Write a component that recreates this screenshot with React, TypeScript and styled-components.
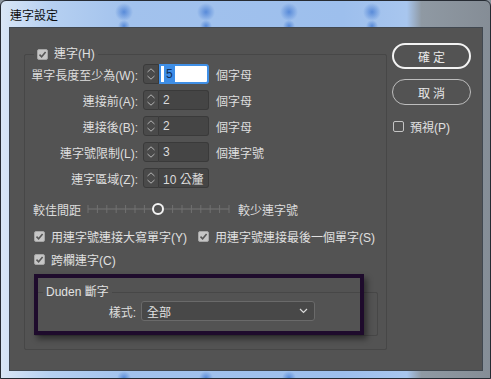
import React, { FC } from 'react';
import styled, { createGlobalStyle } from 'styled-components';

const GlobalStyle = createGlobalStyle`
  html, body {
    margin: 0;
    padding: 0;
    background: #8a939c;
  }
  body {
    font-family: 'Liberation Sans', 'Noto Sans CJK TC', sans-serif;
    font-size: 12px;
  }
`;

const spot = (x: number, y: number, r: number) =>
  `radial-gradient(circle at ${x}px ${y}px, rgba(70, 125, 212, 0.8) 0, rgba(70, 125, 212, 0.4) ${r / 2}px, rgba(70, 125, 212, 0) ${r}px)`;

const Window = styled.div`
  position: relative;
  width: 491px;
  height: 379px;
  box-sizing: border-box;
  display: flex;
  flex-direction: column;
  padding: 0 7px 7px 8px;
  border: 1px solid #262b33;
  border-radius: 6px 6px 0 0;
  overflow: hidden;
  background:
    ${[123, 205, 288, 371].map((x) => spot(x, 11, 9)).join(',')},
    ${[123, 205, 288, 371].map((x) => spot(x, 25, 6)).join(',')},
    ${[123, 205, 288].map((x) => spot(x, 377, 7)).join(',')},
    linear-gradient(
      to right,
      #d9e6f6 0%,
      #b6d0f1 10%,
      #a2c2ed 26%,
      #9dbfed 70%,
      #a8c6ee 83%,
      #8f99a3 86%,
      #858d96 100%
    );
`;

const TitleBar = styled.div`
  height: 26px;
  display: flex;
  align-items: center;
  padding-left: 1px;
  color: #0c0c0c;
  font-size: 12px;
  font-family: 'Noto Sans CJK TC', sans-serif;
`;

const Panel = styled.div`
  flex: 1;
  display: flex;
  align-items: flex-start;
  gap: 5px;
  padding: 15px 0 0 14px;
  background: #535353;
  border: 1px solid #414850;
  min-height: 0;
`;

const Group = styled.fieldset<{ $inner?: boolean }>`
  margin: ${(p) => (p.$inner ? '19px 8px 0 9px' : '4px 0 0 0')};
  padding: ${(p) => (p.$inner ? '0 0 14px 0' : '0 0 13px 0')};
  width: ${(p) => (p.$inner ? 'auto' : '363px')};
  box-sizing: border-box;
  min-width: 0;
  border: 1px solid #474747;
  border-radius: 2px;
`;

const GroupLegend = styled.legend<{ $offset: number }>`
  margin-left: ${(p) => p.$offset}px;
  padding: 0 3px;
  height: 14px;
  line-height: 14px;
  color: #e2e2e2;
  font-size: 12px;
`;

const CheckLabel = styled.label`
  display: inline-flex;
  align-items: center;
  gap: 6px;
  height: 14px;
  color: #e0e0e0;
  font-size: 12px;
  white-space: nowrap;
`;

const Box = styled.span<{ $checked?: boolean }>`
  width: 11px;
  height: 11px;
  box-sizing: border-box;
  flex-shrink: 0;
  border-radius: 2px;
  border: 1px solid ${(p) => (p.$checked ? '#a6a6a6' : '#c4c4c4')};
  background: ${(p) => (p.$checked ? '#c6c6c6' : 'transparent')};
  display: inline-flex;
  align-items: center;
  justify-content: center;
`;

const CheckBox: FC<{ checked?: boolean; label: string }> = ({ checked, label }) => (
  <CheckLabel>
    <Box $checked={checked}>
      {checked && (
        <svg width='9' height='9' viewBox='0 0 9 9'>
          <path d='M1.5 4.6 L3.6 6.7 L7.6 2' fill='none' stroke='#575757' strokeWidth='1.6' />
        </svg>
      )}
    </Box>
    {label}
  </CheckLabel>
);

const FormGrid = styled.div`
  margin-top: 3px;
  display: grid;
  grid-template-columns: 113px 66px auto;
  grid-auto-rows: 20px;
  column-gap: 5px;
  row-gap: 6px;
  align-items: center;
`;

const FieldLabel = styled.span`
  text-align: right;
  color: #dedede;
  font-size: 12px;
  white-space: nowrap;
`;

const Unit = styled.span`
  padding-left: 2px;
  color: #dedede;
  font-size: 12px;
  white-space: nowrap;
`;

const Spinner = styled.div`
  display: flex;
  height: 20px;
`;

const StepBox = styled.div`
  width: 16px;
  box-sizing: border-box;
  border: 1px solid #3a3a3a;
  border-radius: 3px 0 0 3px;
  background: #4a4a4a;
  display: flex;
  align-items: center;
  justify-content: center;
`;

const ValueBox = styled.div<{ $focused?: boolean }>`
  flex: 1;
  box-sizing: border-box;
  display: flex;
  align-items: center;
  padding-left: ${(p) => (p.$focused ? '3px' : '4px')};
  border: ${(p) => (p.$focused ? '2px solid #3f8fe6' : '1px solid #3a3a3a')};
  border-left: ${(p) => (p.$focused ? '2px solid #3f8fe6' : 'none')};
  border-radius: 0 3px 3px 0;
  background: ${(p) => (p.$focused ? '#ffffff' : '#454545')};
  color: #dcdcdc;
  font-size: 12px;
  white-space: nowrap;
`;

const Selected = styled.span`
  background: #3d8de6;
  color: #0e2c57;
  padding: 0 2px;
  line-height: 16px;
`;

const StepIcon: FC = () => (
  <svg width='10' height='16' viewBox='0 0 10 16'>
    <path d='M1.5 6 L5 2.8 L8.5 6' fill='none' stroke='#b4b4b4' strokeWidth='1' />
    <path d='M1.5 10 L5 13.2 L8.5 10' fill='none' stroke='#b4b4b4' strokeWidth='1' />
  </svg>
);

const NumberField: FC<{ value: string; focused?: boolean }> = ({ value, focused }) => (
  <Spinner>
    <StepBox>
      <StepIcon />
    </StepBox>
    <ValueBox $focused={focused}>{focused ? <Selected>{value}</Selected> : value}</ValueBox>
  </Spinner>
);

const SliderRow = styled.div`
  margin-top: 13px;
  padding-left: 8px;
  height: 16px;
  display: flex;
  align-items: center;
  color: #dcdcdc;
  font-size: 12px;
  white-space: nowrap;
`;

const SliderLabel = styled.span`
  width: 54px;
`;

const SliderEnd = styled.span`
  margin-left: 8px;
`;

const Slider: FC = () => {
  const ticks = Array.from({ length: 16 }, (_, i) => 1 + i * 9.4);
  return (
    <svg width='143' height='16' viewBox='0 0 143 16'>
      <line x1='1' y1='8' x2='142' y2='8' stroke='#767676' strokeWidth='1' />
      {ticks.map((x) => (
        <line key={x} x1={x} y1='4' x2={x} y2='12' stroke='#707070' strokeWidth='1' />
      ))}
      <circle cx='71' cy='8' r='5' fill='#535353' stroke='#f4f4f4' strokeWidth='2' />
    </svg>
  );
};

const CheckRow = styled.div<{ $gap: number }>`
  margin-top: ${(p) => p.$gap}px;
  padding-left: 9px;
  display: grid;
  grid-template-columns: 164px auto;
`;

const SelectGrid = styled.div`
  margin-top: 2px;
  display: grid;
  grid-template-columns: 101px 174px;
  column-gap: 5px;
  align-items: center;
`;

const Select = styled.div`
  height: 20px;
  box-sizing: border-box;
  display: flex;
  align-items: center;
  justify-content: space-between;
  padding: 0 6px 0 5px;
  border: 1px solid #6a6a6a;
  border-radius: 3px;
  background: #484848;
  color: #e2e2e2;
  font-size: 12px;
`;

const Side = styled.div`
  width: 79px;
  display: flex;
  flex-direction: column;
`;

const DialogButton = styled.button<{ $primary?: boolean }>`
  height: 26px;
  margin-bottom: 10px;
  box-sizing: border-box;
  border-radius: 13px;
  border: ${(p) => (p.$primary ? '2px solid #f3f3f3' : '1px solid #bdbdbd')};
  background: transparent;
  color: #e8e8e8;
  font-family: 'Noto Sans CJK TC', sans-serif;
  font-size: 12px;
  letter-spacing: 3px;
  padding: 0 0 0 3px;
`;

const Preview = styled.div`
  margin-top: 4px;
  padding-left: 1px;
`;

const Highlight = styled.div`
  position: absolute;
  left: 33px;
  top: 273px;
  width: 330px;
  height: 61px;
  box-sizing: border-box;
  border: 4px solid #1e0b2c;
  box-shadow: 3px 4px 6px rgba(0, 0, 0, 0.45);
  pointer-events: none;
`;

const rows = [
  { label: '單字長度至少為(W):', value: '5', unit: '個字母', focused: true },
  { label: '連接前(A):', value: '2', unit: '個字母' },
  { label: '連接後(B):', value: '2', unit: '個字母' },
  { label: '連字號限制(L):', value: '3', unit: '個連字號' },
  { label: '連字區域(Z):', value: '10 公釐', unit: '' },
];

export default function App() {
  return (
    <>
      <GlobalStyle />
      <Window>
        <TitleBar>連字設定</TitleBar>
        <Panel>
          <Group>
            <GroupLegend $offset={9}>
              <CheckBox checked label='連字(H)' />
            </GroupLegend>
            <FormGrid>
              {rows.map((r) => (
                <React.Fragment key={r.label}>
                  <FieldLabel>{r.label}</FieldLabel>
                  <NumberField value={r.value} focused={r.focused} />
                  <Unit>{r.unit}</Unit>
                </React.Fragment>
              ))}
            </FormGrid>
            <SliderRow>
              <SliderLabel>較佳間距</SliderLabel>
              <Slider />
              <SliderEnd>較少連字號</SliderEnd>
            </SliderRow>
            <CheckRow $gap={12}>
              <CheckBox checked label='用連字號連接大寫單字(Y)' />
              <CheckBox checked label='用連字號連接最後一個單字(S)' />
            </CheckRow>
            <CheckRow $gap={9}>
              <CheckBox checked label='跨欄連字(C)' />
            </CheckRow>
            <Group $inner>
              <GroupLegend $offset={8}>Duden 斷字</GroupLegend>
              <SelectGrid>
                <FieldLabel>樣式:</FieldLabel>
                <Select>
                  全部
                  <svg width='9' height='6' viewBox='0 0 9 6'>
                    <path d='M1 1 L4.5 4.5 L8 1' fill='none' stroke='#d8d8d8' strokeWidth='1.2' />
                  </svg>
                </Select>
              </SelectGrid>
            </Group>
          </Group>
          <Side>
            <DialogButton $primary>確定</DialogButton>
            <DialogButton>取消</DialogButton>
            <Preview>
              <CheckBox label='預視(P)' />
            </Preview>
          </Side>
        </Panel>
        <Highlight />
      </Window>
    </>
  );
}
